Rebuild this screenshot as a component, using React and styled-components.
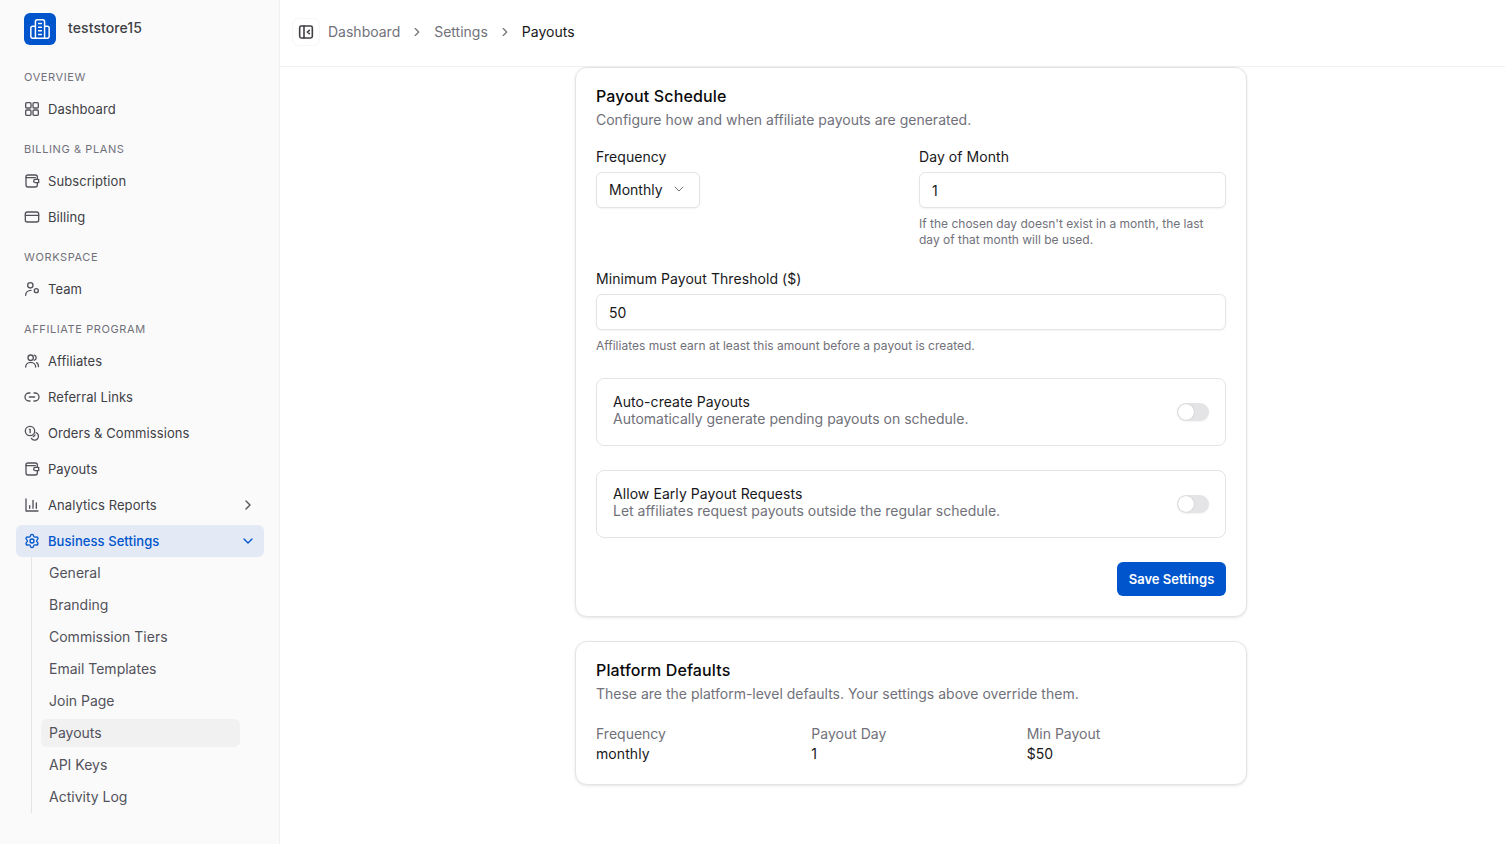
import React from "react";
import styled, { createGlobalStyle } from "styled-components";
import { Settings, ChevronRight, ChevronDown } from "lucide-react";

const GlobalStyle = createGlobalStyle`
	html, body {
		margin: 0;
		padding: 0;
		height: 100%;
		overflow: hidden;
		background: #fff;
		font-family: Inter, "Liberation Sans", sans-serif;
	}
	* { box-sizing: border-box; }
`;

const Layout = styled.div`
	display: flex;
	height: 844px;
`;

// Sidebar
const Sidebar = styled.aside`
	width: 280px;
	flex: none;
	background: #fafafa;
	border-right: 1px solid #f0f0f0;
	padding: 13px 15px 0 16px;
`;

const Brand = styled.div`
	display: flex;
	align-items: center;
	gap: 12px;
	padding-left: 8px;
	height: 32px;
	margin-bottom: 24px;
`;

const BrandLogo = styled.div`
	width: 32px;
	height: 32px;
	border-radius: 6px;
	background: #0055cc;
	color: #fff;
	display: flex;
	align-items: center;
	justify-content: center;
`;

const BrandName = styled.span`
	font-size: 14px;
	font-weight: 500;
	letter-spacing: 0.09px;
	color: #3f3f46;
	padding-bottom: 3px;
`;

const Section = styled.div`
	margin-bottom: 16px;
`;

const SectionLabel = styled.div`
	height: 16px;
	line-height: 16px;
	padding-left: 8px;
	margin-bottom: 8px;
	font-size: 11px;
	letter-spacing: 0.6px;
	color: #71717a;
`;

const NavList = styled.div`
	display: flex;
	flex-direction: column;
	gap: 4px;
`;

const NavItem = styled.div`
	height: 32px;
	display: flex;
	align-items: center;
	gap: 8px;
	padding: 0 8px;
	border-radius: 6px;
	font-size: 13px;
	letter-spacing: 0.07px;
	font-weight: ${(p) => (p.$active ? 500 : 400)};
	color: ${(p) => (p.$active ? "#0055cc" : "#3f3f46")};
	background: ${(p) => (p.$active ? "#e3eaf5" : "transparent")};

	svg {
		flex: none;
		color: ${(p) => (p.$active ? "#0055cc" : "#52525b")};
	}

	.chev {
		margin-left: auto;
	}
`;

const SubList = styled.div`
	margin-left: 15px;
	border-left: 1px solid #e4e4e7;
	padding: 0 0 0 9px;
	width: 209px;
`;

const SubItem = styled.div`
	height: ${(p) => (p.$active ? "28px" : "32px")};
	margin: ${(p) => (p.$active ? "2px 0" : "0")};
	display: flex;
	align-items: center;
	padding-left: 8px;
	padding-bottom: 2px;
	border-radius: 6px;
	font-size: 14px;
	color: #52525b;
	background: ${(p) => (p.$active ? "#f1f1f2" : "transparent")};
`;

// Main
const Main = styled.main`
	flex: 1;
	min-width: 0;
`;

const Header = styled.header`
	height: 67px;
	border-bottom: 1px solid #f0f0f0;
	display: flex;
	align-items: center;
	padding-left: 12px;
	padding-bottom: 2px;
`;

const SidebarToggle = styled.div`
	width: 28px;
	height: 28px;
	border-radius: 6px;
	border: 1px solid #f7f7f7;
	color: #3f3f46;
	display: flex;
	align-items: center;
	justify-content: center;
	margin-right: 8px;
`;

const Crumb = styled.span`
	font-size: 14px;
	padding-bottom: 2px;
	color: ${(p) => (p.$current ? "#18181b" : "#71717a")};
`;

const CrumbSep = styled.span`
	display: flex;
	margin: 0 10px;
	color: #71717a;
`;

const Content = styled.div`
	width: 672px;
	margin-left: 295px;
	display: flex;
	flex-direction: column;
	gap: 24px;
`;

const Card = styled.section`
	background: #fff;
	border: 1px solid #e4e4e7;
	border-radius: 12px;
	box-shadow: 0 1px 3px rgba(0, 0, 0, 0.1);
	padding: 19px 20px 20px;
`;

const CardTitle = styled.h2`
	margin: 0;
	font-size: 16px;
	line-height: 18px;
	font-weight: 500;
	letter-spacing: 0.13px;
	color: #09090b;
`;

const CardText = styled.p`
	margin: 6px 0 0;
	font-size: 14px;
	line-height: 18px;
	color: #71717a;
`;

const TwoCols = styled.div`
	display: grid;
	grid-template-columns: 1fr 307px;
	gap: 16px;
	margin-top: 19px;
`;

const Field = styled.div`
	margin-top: ${(p) => p.$top || 0}px;
`;

const Label = styled.div`
	font-size: 14px;
	line-height: 18px;
	font-weight: 400;
	letter-spacing: 0.07px;
	color: #18181b;
	margin-bottom: 6px;
`;

const SelectBox = styled.div`
	display: inline-flex;
	align-items: center;
	gap: 8px;
	height: 36px;
	padding: 0 12px 2px;
	border: 1px solid #e4e4e7;
	border-radius: 6px;
	box-shadow: 0 1px 2px rgba(0, 0, 0, 0.05);
	font-size: 14px;
	color: #18181b;
	background: #fff;

	svg {
		color: #71717a;
	}
`;

const Input = styled.input`
	display: block;
	width: 100%;
	height: 36px;
	padding: 0 12px;
	border: 1px solid #e4e4e7;
	border-radius: 6px;
	box-shadow: 0 1px 2px rgba(0, 0, 0, 0.05);
	font-family: inherit;
	font-size: 14px;
	color: #18181b;
	background: #fff;
	outline: none;
`;

const Hint = styled.p`
	margin: 8px 0 0;
	font-size: 12px;
	line-height: 16px;
	color: #71717a;
`;

const ToggleRow = styled.div`
	display: flex;
	align-items: center;
	justify-content: space-between;
	height: 68px;
	margin-top: 24px;
	padding: 0 16px;
	border: 1px solid #e4e4e7;
	border-radius: 8px;
`;

const ToggleCopy = styled.div`
	padding-bottom: 4px;
`;

const ToggleTitle = styled.div`
	font-size: 14px;
	line-height: 17px;
	font-weight: 400;
	letter-spacing: 0.07px;
	color: #18181b;
`;

const ToggleText = styled.div`
	font-size: 14px;
	line-height: 17px;
	color: #71717a;
`;

const Switch = styled.div`
	width: 32px;
	height: 18px;
	border-radius: 9px;
	background: #e4e4e7;
	box-shadow: 0 1px 2px rgba(0, 0, 0, 0.05);
	padding: 1px;

	&::before {
		content: "";
		display: block;
		width: 16px;
		height: 16px;
		border-radius: 50%;
		background: #fff;
		box-shadow: 0 0 1px rgba(0, 0, 0, 0.3);
	}
`;

const Actions = styled.div`
	display: flex;
	justify-content: flex-end;
	margin-top: 24px;
`;

const SaveButton = styled.button`
	width: 109px;
	height: 34px;
	padding: 0;
	border: none;
	border-radius: 6px;
	background: #0055cc;
	color: #fff;
	font-family: inherit;
	font-size: 13px;
	font-weight: 600;
`;

const StatsGrid = styled.div`
	display: grid;
	grid-template-columns: repeat(3, 1fr);
	gap: 16px;
	margin-top: 21px;
`;

const StatLabel = styled.div`
	font-size: 14px;
	line-height: 20px;
	color: #71717a;
`;

const StatValue = styled.div`
	font-size: 14px;
	line-height: 20px;
	letter-spacing: 0.07px;
	color: #18181b;
`;

// Icons drawn by hand, the packages have none with these strokes
const Glyph = ({ size = 16, width = 2, children }) => (
	<svg
		width={size}
		height={size}
		viewBox="0 0 24 24"
		fill="none"
		stroke="currentColor"
		strokeWidth={width}
		strokeLinecap="round"
		strokeLinejoin="round"
	>
		{children}
	</svg>
);

const BuildingLogo = () => (
	<Glyph size={22} width={1.6}>
		<path d="M7 22V4a2 2 0 0 1 2-2h6a2 2 0 0 1 2 2v18Z" />
		<path d="M7 9H4a2 2 0 0 0-2 2v9a2 2 0 0 0 2 2h3" />
		<path d="M17 9h3a2 2 0 0 1 2 2v9a2 2 0 0 1-2 2h-3" />
		<path d="M10.5 6h3M10.5 10h3M10.5 14h3M10.5 18h3" />
	</Glyph>
);

const GridIcon = () => (
	<Glyph>
		<rect x="2.5" y="2.5" width="8" height="8" rx="1.5" />
		<rect x="13.5" y="2.5" width="8" height="8" rx="1.5" />
		<rect x="2.5" y="13.5" width="8" height="8" rx="1.5" />
		<rect x="13.5" y="13.5" width="8" height="8" rx="1.5" />
	</Glyph>
);

const WalletIcon = () => (
	<Glyph>
		<path d="M20 9V6a3 3 0 0 0-3-3H6a3 3 0 0 0-3 3v12a3 3 0 0 0 3 3h11a3 3 0 0 0 3-3v-3" />
		<path d="M3 7h14" />
		<path d="M22 9.5h-5a2.5 2.5 0 0 0 0 5h5Z" />
	</Glyph>
);

const CardIcon = () => (
	<Glyph>
		<rect x="2" y="4.5" width="20" height="15" rx="3" />
		<path d="M2 9.5h20" />
	</Glyph>
);

const TeamIcon = () => (
	<Glyph>
		<circle cx="9.5" cy="6.5" r="4" />
		<path d="M2.5 21.5c0-4.2 3.3-7.5 8-7.5" />
		<circle cx="18.5" cy="14.5" r="3" />
	</Glyph>
);

const UsersIcon = () => (
	<Glyph>
		<circle cx="10" cy="7" r="4" />
		<path d="M2.5 21c0-4 3.2-7 7.5-7s7.5 3 7.5 7" />
		<path d="M15.5 3.2a4 4 0 0 1 0 7.6" />
		<path d="M19 14.5c1.6.9 2.7 3.2 2.7 6" />
	</Glyph>
);

const LinkIcon = () => (
	<Glyph>
		<path d="M9 6H7.5a6 6 0 0 0 0 12H9" />
		<path d="M15 6h1.5a6 6 0 0 1 0 12H15" />
		<path d="M8 12h8" />
	</Glyph>
);

const CoinsIcon = () => (
	<Glyph>
		<circle cx="9" cy="9" r="7" />
		<path d="M8 6.5h1.2v5" />
		<path d="M18 11.5a5.8 5.8 0 1 1-7 8.5" />
		<path d="M16.5 15l-2.5 2.5" />
	</Glyph>
);

const ChartIcon = () => (
	<Glyph>
		<path d="M3 3v18h18" />
		<path d="M8.5 17v-4M13.5 17V5M18.5 17V9" />
	</Glyph>
);

const PanelIcon = () => (
	<Glyph size={16} width={2.4}>
		<rect x="2.5" y="3" width="19" height="18" rx="2.5" />
		<path d="M9 3v18" />
		<path d="M17 9.5 14 12l3 2.5" />
	</Glyph>
);

const ic = { size: 16, strokeWidth: 2 };

const sections = [
	{ label: "OVERVIEW", items: [{ name: "Dashboard", Icon: GridIcon }] },
	{
		label: "BILLING & PLANS",
		items: [
			{ name: "Subscription", Icon: WalletIcon },
			{ name: "Billing", Icon: CardIcon },
		],
	},
	{ label: "WORKSPACE", items: [{ name: "Team", Icon: TeamIcon }] },
];

const affiliateItems = [
	{ name: "Affiliates", Icon: UsersIcon },
	{ name: "Referral Links", Icon: LinkIcon },
	{ name: "Orders & Commissions", Icon: CoinsIcon },
	{ name: "Payouts", Icon: WalletIcon },
];

const subItems = ["General", "Branding", "Commission Tiers", "Email Templates", "Join Page", "Payouts", "API Keys", "Activity Log"];

const defaults = [
	{ label: "Frequency", value: "monthly" },
	{ label: "Payout Day", value: "1" },
	{ label: "Min Payout", value: "$50" },
];

export default function App() {
	return (
		<Layout>
			<GlobalStyle />
			<Sidebar>
				<Brand>
					<BrandLogo>
						<BuildingLogo />
					</BrandLogo>
					<BrandName>teststore15</BrandName>
				</Brand>
				{sections.map((s) => (
					<Section key={s.label}>
						<SectionLabel>{s.label}</SectionLabel>
						<NavList>
							{s.items.map(({ name, Icon }) => (
								<NavItem key={name}>
									<Icon />
									{name}
								</NavItem>
							))}
						</NavList>
					</Section>
				))}
				<SectionLabel>AFFILIATE PROGRAM</SectionLabel>
				<NavList>
					{affiliateItems.map(({ name, Icon }) => (
						<NavItem key={name}>
							<Icon />
							{name}
						</NavItem>
					))}
					<NavItem>
						<ChartIcon />
						Analytics Reports
						<ChevronRight className="chev" {...ic} />
					</NavItem>
					<NavItem $active>
						<Settings {...ic} />
						Business Settings
						<ChevronDown className="chev" {...ic} />
					</NavItem>
				</NavList>
				<SubList>
					{subItems.map((name) => (
						<SubItem key={name} $active={name === "Payouts"}>
							{name}
						</SubItem>
					))}
				</SubList>
			</Sidebar>
			<Main>
				<Header>
					<SidebarToggle>
						<PanelIcon />
					</SidebarToggle>
					<Crumb>Dashboard</Crumb>
					<CrumbSep>
						<ChevronRight size={14} />
					</CrumbSep>
					<Crumb>Settings</Crumb>
					<CrumbSep>
						<ChevronRight size={14} />
					</CrumbSep>
					<Crumb $current>Payouts</Crumb>
				</Header>
				<Content>
					<Card>
						<CardTitle>Payout Schedule</CardTitle>
						<CardText>Configure how and when affiliate payouts are generated.</CardText>
						<TwoCols>
							<div>
								<Label>Frequency</Label>
								<SelectBox>
									Monthly
									<ChevronDown size={16} strokeWidth={1.5} />
								</SelectBox>
							</div>
							<div>
								<Label>Day of Month</Label>
								<Input defaultValue="1" />
								<Hint>If the chosen day doesn't exist in a month, the last day of that month will be used.</Hint>
							</div>
						</TwoCols>
						<Field $top={22}>
							<Label>Minimum Payout Threshold ($)</Label>
							<Input defaultValue="50" />
							<Hint>Affiliates must earn at least this amount before a payout is created.</Hint>
						</Field>
						<ToggleRow>
							<ToggleCopy>
								<ToggleTitle>Auto-create Payouts</ToggleTitle>
								<ToggleText>Automatically generate pending payouts on schedule.</ToggleText>
							</ToggleCopy>
							<Switch />
						</ToggleRow>
						<ToggleRow>
							<ToggleCopy>
								<ToggleTitle>Allow Early Payout Requests</ToggleTitle>
								<ToggleText>Let affiliates request payouts outside the regular schedule.</ToggleText>
							</ToggleCopy>
							<Switch />
						</ToggleRow>
						<Actions>
							<SaveButton>Save Settings</SaveButton>
						</Actions>
					</Card>
					<Card>
						<CardTitle>Platform Defaults</CardTitle>
						<CardText>These are the platform-level defaults. Your settings above override them.</CardText>
						<StatsGrid>
							{defaults.map((d) => (
								<div key={d.label}>
									<StatLabel>{d.label}</StatLabel>
									<StatValue>{d.value}</StatValue>
								</div>
							))}
						</StatsGrid>
					</Card>
				</Content>
			</Main>
		</Layout>
	);
}
